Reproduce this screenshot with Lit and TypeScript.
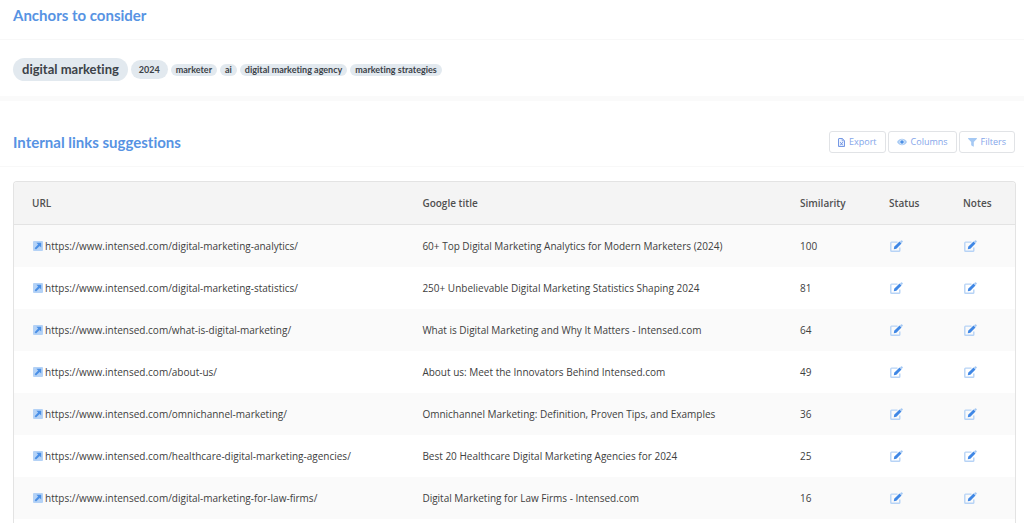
import { LitElement, html, css } from "lit";
import { customElement } from "lit/decorators.js";

interface Suggestion {
  path: string;
  title: string;
  similarity: number;
}

const anchors = [
  { text: "digital marketing", size: "large" },
  { text: "2024", size: "medium" },
  { text: "marketer", size: "small" },
  { text: "ai", size: "small" },
  { text: "digital marketing agency", size: "small" },
  { text: "marketing strategies", size: "small" },
];

const suggestions: Suggestion[] = [
  { path: "digital-marketing-analytics", title: "60+ Top Digital Marketing Analytics for Modern Marketers (2024)", similarity: 100 },
  { path: "digital-marketing-statistics", title: "250+ Unbelievable Digital Marketing Statistics Shaping 2024", similarity: 81 },
  { path: "what-is-digital-marketing", title: "What is Digital Marketing and Why It Matters - Intensed.com", similarity: 64 },
  { path: "about-us", title: "About us: Meet the Innovators Behind Intensed.com", similarity: 49 },
  { path: "omnichannel-marketing", title: "Omnichannel Marketing: Definition, Proven Tips, and Examples", similarity: 36 },
  { path: "healthcare-digital-marketing-agencies", title: "Best 20 Healthcare Digital Marketing Agencies for 2024", similarity: 25 },
  { path: "digital-marketing-for-law-firms", title: "Digital Marketing for Law Firms - Intensed.com", similarity: 16 },
];

const openIcon = html`<svg width="10" height="10" viewBox="0 0 10 10" aria-hidden="true">
  <rect width="10" height="10" rx="1" fill="#b4d2f6" />
  <path d="M3.4 1.8H8.2V6.6L6.7 5.1L3 8.6L1.6 7.2L5.1 3.5Z" fill="#4a8fe6" />
</svg>`;

const editIcon = html`<svg width="13" height="12" viewBox="0 0 13 12" aria-hidden="true">
  <path d="M7.5 2.1H1.6Q.8 2.1 .8 2.9V10.4Q.8 11.2 1.6 11.2H9Q9.8 11.2 9.8 10.4V7.5" fill="none" stroke="#b7d3f6" stroke-width="1.4" />
  <path d="M10 1.5L11 .5Q11.5 0 12 .5L12.6 1.1Q13.1 1.6 12.6 2.1L11.6 3.1Z" fill="#a3c7f3" />
  <path d="M9.5 1.6L11.5 3.6L6.4 8.8L3.8 9.3L4.2 6.8Z" fill="#3f87e5" />
</svg>`;

const exportIcon = html`<svg width="7" height="9" viewBox="0 0 7 9" aria-hidden="true">
  <path d="M1 .5H4.3L6.5 2.7V8.5H.5V1Q.5 .5 1 .5Z" fill="#eef3fd" stroke="#7598e4" />
  <path d="M4.2 .5V2.8H6.5" fill="none" stroke="#7598e4" stroke-width=".8" />
  <path d="M2.2 4.2L4.8 7.3M4.8 4.2L2.2 7.3" stroke="#6a90e2" />
</svg>`;

const eyeIcon = html`<svg width="10" height="8" viewBox="0 0 10 8" aria-hidden="true">
  <path d="M0 4Q2 .7 5 .7T10 4Q8 7.3 5 7.3T0 4Z" fill="#a9cbf4" />
  <circle cx="5" cy="4" r="2.5" fill="#e6f0fc" />
  <circle cx="5" cy="4" r="1.8" fill="#4a8fe6" />
</svg>`;

const filterIcon = html`<svg width="9" height="9" viewBox="0 0 9 9" aria-hidden="true">
  <path d="M.3 0H8.7Q9.2 .5 8.7 1L5.8 4V8.3Q5.7 9 5.1 8.6L3.2 7.2V4L.3 1Q-.2 .5 .3 0Z" fill="#a5c9f4" />
</svg>`;

@customElement("app-root")
export class AppRoot extends LitElement {
  static styles = css`
    :host {
      display: flex;
      flex-direction: column;
      box-sizing: border-box;
      height: 100vh;
      overflow: hidden;
      background: #fff;
      color: #404040;
      font-family: "Open Sans", sans-serif;
      font-size: 10px;
      line-height: 14px;
      font-variant-ligatures: none;
    }
    h2 {
      margin: 0;
      color: #5793e3;
      font-family: Lato, "Open Sans", sans-serif;
      font-size: 15px;
      line-height: 20px;
      font-weight: 700;
    }
    .head {
      display: flex;
      align-items: center;
      justify-content: space-between;
      padding: 5px 9px 14px 13px;
      border-bottom: 1px solid #f8f8f8;
    }
    .tags {
      display: flex;
      align-items: center;
      gap: 3px;
      margin: 0;
      padding: 18px 13px 15px;
      list-style: none;
      font-family: Lato, "Open Sans", sans-serif;
      font-weight: 700;
    }
    .tag {
      border-radius: 12px;
      background: #e2e9ef;
      color: #3c4248;
    }
    .large {
      padding: 2px 9px;
      font-size: 13px;
      line-height: 19px;
    }
    .medium {
      padding: 2px 8px;
      font-size: 9px;
      line-height: 15px;
    }
    .small {
      padding: 0 5px;
      font-size: 9px;
      line-height: 12px;
    }
    .divider {
      height: 5px;
      background: #fafafa;
    }
    .links {
      padding: 30px 9px 13px 13px;
    }
    .tools {
      display: flex;
      gap: 2px;
    }
    .tool {
      display: flex;
      align-items: center;
      gap: 4px;
      box-sizing: border-box;
      height: 22px;
      padding: 0 8px;
      border: 1px solid #e1e3e6;
      border-radius: 3px;
      background: #fff;
      color: #84a6ea;
      font: inherit;
      font-size: 9px;
    }
    .panel {
      flex: 1 0 auto;
      margin: 14px 8px 0 13px;
      border: 1px solid #e3e3e3;
      border-bottom: 0;
      border-radius: 4px 4px 0 0;
      overflow: hidden;
    }
    table {
      width: 100%;
      table-layout: fixed;
      border-collapse: separate;
      border-spacing: 0;
    }
    th,
    td {
      box-sizing: border-box;
      height: 42px;
      padding: 0 0 0 18px;
      text-align: left;
      white-space: nowrap;
    }
    th {
      height: 43px;
      border-bottom: 1px solid #e3e3e3;
      background: #f4f4f4;
      color: #505050;
      font-weight: 600;
    }
    .url {
      width: 39%;
    }
    .similarity {
      width: 89px;
    }
    .status {
      width: 74px;
    }
    .notes {
      width: 70px;
    }
    tbody tr:nth-child(odd) {
      background: #fafafa;
    }
    .link {
      display: flex;
      align-items: center;
      gap: 2px;
      padding-left: 1px;
      color: inherit;
      text-decoration: none;
    }
    svg {
      display: block;
      flex: none;
    }
    .edit {
      display: block;
      padding: 0 0 0 1px;
      border: 0;
      background: none;
    }
  `;

  render() {
    return html`
      <section>
        <header class="head"><h2>Anchors to consider</h2></header>
        <ul class="tags">
          ${anchors.map((a) => html`<li class="tag ${a.size}">${a.text}</li>`)}
        </ul>
      </section>
      <div class="divider"></div>
      <header class="head links">
        <h2>Internal links suggestions</h2>
        <div class="tools">
          <button class="tool" type="button">${exportIcon}Export</button>
          <button class="tool" type="button">${eyeIcon}Columns</button>
          <button class="tool" type="button">${filterIcon}Filters</button>
        </div>
      </header>
      <div class="panel">
        <table>
          <thead>
            <tr>
              <th class="url" scope="col">URL</th>
              <th scope="col">Google title</th>
              <th class="similarity" scope="col">Similarity</th>
              <th class="status" scope="col">Status</th>
              <th class="notes" scope="col">Notes</th>
            </tr>
          </thead>
          <tbody>
            ${suggestions.map((s) => {
              const url = `https://www.intensed.com/${s.path}/`;
              return html`<tr>
                <td><a class="link" href=${url}>${openIcon}<span>${url}</span></a></td>
                <td>${s.title}</td>
                <td>${s.similarity}</td>
                <td><button class="edit" type="button" aria-label="Edit status">${editIcon}</button></td>
                <td><button class="edit" type="button" aria-label="Edit notes">${editIcon}</button></td>
              </tr>`;
            })}
          </tbody>
        </table>
      </div>
    `;
  }
}
